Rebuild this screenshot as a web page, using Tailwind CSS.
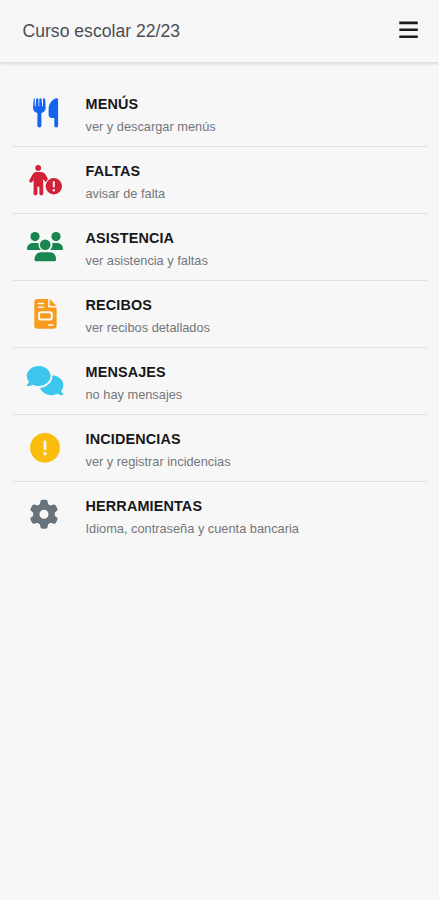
<!DOCTYPE html>
<html lang="es">
<head>
<meta charset="utf-8">
<meta name="viewport" content="width=device-width, initial-scale=1">
<title>Curso escolar 22/23</title>
<script src="https://cdn.jsdelivr.net/npm/@tailwindcss/browser@4"></script>
</head>
<body class="min-h-screen bg-[#f7f7f7] font-['Liberation_Sans',Arial,sans-serif]">
<header class="flex h-[63px] items-center justify-between border-b border-[#e2e2e2] pr-[21px] pl-[22.5px] shadow-[0_1px_3px_rgba(0,0,0,0.12)]">
  <h1 class="text-[17.6px] leading-6 text-[#4b4d52]">Curso escolar 22/23</h1>
  <button aria-label="Menú" class="mb-[3px]">
    <svg class="block" width="19" height="18" viewBox="0 0 19 18" fill="#1c1c1c"><path d="M.3 .6h18.500V3.200H.3zM.3 7.500h18.500v2.600H.3zM.3 14.400h18.500V17H.3z"/></svg>
  </button>
</header>
<main class="mr-3 ml-[13px] pt-[17px]">
  <a class="flex h-[67px] items-start border-b border-[#dedede] pt-[13px] pl-[7px]">
    <svg class="mr-[15.5px] shrink-0" width="50" height="40" viewBox="20 93 50 40" fill="#1463f3"><path d="M33.8 98.200q1 0 1 1v6.800q0 .5.4.5t.4-.5l.6-6.900q.1-.9 1.100-.9t1.100 .9l.2 6.900q0 .5.3.5t.3-.5l.2-6.900q.1-.9 1.100-.9t1.100 .9l.6 6.900q0 .5.4.5t.4-.5v-6.800q0-1 1-1t1.100 .9l.6 8.500q0 4.100-4.300 5.500v12.500q0 1.900-2 1.900t-2-1.900v-12.500q-4.400-1.400-4.400-5.500l.7-8.500q.1-.9 1.100-.9zM56.800 98.200q1.300 0 1.300 1.400v26q0 1.900-1.900 1.900t-1.900-1.900v-7.500h-2.300q-3.400 0-3.400-3.800v-4.800c0-6.200 4-10.800 8.200-11.300z"/></svg>
    <div><h2 class="text-[14.4px] leading-[23px] font-bold tracking-[0.15px] text-[#171719]">MENÚS</h2><p class="text-[12.8px] leading-[22px] text-[#74767a]">ver y descargar menús</p></div>
  </a>
  <a class="flex h-[67px] items-start border-b border-[#dedede] pt-[13px] pl-[7px]">
    <svg class="mr-[15.5px] shrink-0" width="50" height="40" viewBox="20 160 50 40" fill="#d22139"><circle cx="38.2" cy="167.900" r="2.900"/><path d="M35.400 172h5.600c2.200 0 3.600 1 4.600 2.800l2.400 4.200-2.400 3.200-2.400-3.300v14.500q0 1.900-1.900 1.900t-1.900-1.900v-6.700h-2v6.700q0 1.900-1.900 1.900t-1.900-1.900v-13.700l-1.200 2q-1 1.400-2.400.6t-.6-2.400l3.500-5.900q1-1.600 2.500-2z"/><circle cx="53.800" cy="186.300" r="8.200"/><path d="M53.800 182v4.500" stroke="#f7f7f7" stroke-width="2" stroke-linecap="round"/><circle cx="53.800" cy="190.300" r="1.200" fill="#f7f7f7"/></svg>
    <div><h2 class="text-[14.4px] leading-[23px] font-bold tracking-[0.15px] text-[#171719]">FALTAS</h2><p class="text-[12.8px] leading-[22px] text-[#74767a]">avisar de falta</p></div>
  </a>
  <a class="flex h-[67px] items-start border-b border-[#dedede] pt-[13px] pl-[7px]">
    <svg class="mr-[15.5px] shrink-0" width="50" height="40" viewBox="20 227 50 40" fill="#178650"><circle cx="35" cy="236.600" r="4.600"/><circle cx="56" cy="236.600" r="4.600"/><path d="M33 243h4.500l1.200.3c-.5 3 .5 5.200 2.400 6.700H28q-1 0-1-1c0-3.600 2.400-6 6-6zM52.300 243.300l1.200-.3H57c3.600 0 6 2.400 6 6q0 1-1 1H49.900c1.900-1.500 2.900-3.700 2.400-6.700zM41 252.200h9c4 0 6.100 3.200 6.100 7.600q0 1.400-1.400 1.400H35.900q-1.400 0-1.400-1.400c0-4.400 2.500-7.600 6.500-7.600z"/><circle cx="45.200" cy="244.800" r="5.300"/></svg>
    <div><h2 class="text-[14.4px] leading-[23px] font-bold tracking-[0.15px] text-[#171719]">ASISTENCIA</h2><p class="text-[12.8px] leading-[22px] text-[#74767a]">ver asistencia y faltas</p></div>
  </a>
  <a class="flex h-[67px] items-start border-b border-[#dedede] pt-[13px] pl-[7px]">
    <svg class="mr-[15.5px] shrink-0" width="50" height="40" viewBox="20 294 50 40" fill="#f99b1c"><path d="M37.700 299h10.400v7.200q0 1.400 1.400 1.400h7.100v17.800q0 3.300-3.400 3.300H37.700q-3.400 0-3.400-3.300v-23q0-3.400 3.400-3.400zM49.700 299l6.900 7h-6q-.9 0-.9-.9z"/><path d="M38.300 303.500h5.200M38.300 307.300h5.200M48.500 324.900h4.300" stroke="#f7f7f7" stroke-width="1.500" stroke-linecap="round"/><rect x="39" y="312.300" width="12.800" height="7.200" rx="2" fill="none" stroke="#f7f7f7" stroke-width="2"/></svg>
    <div><h2 class="text-[14.4px] leading-[23px] font-bold tracking-[0.15px] text-[#171719]">RECIBOS</h2><p class="text-[12.8px] leading-[22px] text-[#74767a]">ver recibos detallados</p></div>
  </a>
  <a class="flex h-[67px] items-start border-b border-[#dedede] pt-[13px] pl-[7px]">
    <svg class="mr-[15.5px] shrink-0" width="50" height="40" viewBox="20 361 50 40" fill="#3cc5ed"><path transform="translate(26.800 366) scale(.0571)" d="M208 352c114.900 0 208-78.800 208-176S322.900 0 208 0S0 78.800 0 176c0 38.600 14.700 74.300 39.600 103.400c-3.500 9.400-8.700 17.700-14.200 24.700c-4.800 6.200-9.700 11-13.300 14.300c-1.800 1.600-3.300 2.900-4.300 3.700c-.5 .4-.9 .7-1.100 .8l-.2 .2C1 327.200-1.400 334.400 .8 340.900S9.100 352 16 352c21.800 0 43.800-5.600 62.100-12.500c9.200-3.500 17.800-7.400 25.200-11.400C134.100 343.300 169.800 352 208 352zM448 176c0 112.300-99.100 196.900-216.500 207C255.800 457.400 336.400 512 432 512c38.200 0 73.900-8.700 104.700-23.900c7.500 4 16 7.900 25.200 11.400c18.300 6.900 40.300 12.500 62.100 12.500c6.900 0 13.100-4.500 15.200-11.100c2.100-6.600-.2-13.800-5.800-17.900l-.2-.2c-.2-.2-.6-.4-1.100-.8c-1-.8-2.500-2-4.300-3.700c-3.600-3.300-8.500-8.100-13.300-14.300c-5.500-7-10.700-15.400-14.200-24.700c24.900-29 39.600-64.700 39.600-103.400c0-92.800-84.900-168.900-192.600-175.500c.4 5.100 .6 10.300 .6 15.500z"/></svg>
    <div><h2 class="text-[14.4px] leading-[23px] font-bold tracking-[0.15px] text-[#171719]">MENSAJES</h2><p class="text-[12.8px] leading-[22px] text-[#74767a]">no hay mensajes</p></div>
  </a>
  <a class="flex h-[67px] items-start border-b border-[#dedede] pt-[13px] pl-[7px]">
    <svg class="mr-[15.5px] shrink-0" width="50" height="40" viewBox="20 428 50 40" fill="#fbbd0c"><circle cx="45" cy="447.800" r="14.900"/><path d="M45 441.900v7" stroke="#f7f7f7" stroke-width="2.800" stroke-linecap="round"/><circle cx="45" cy="453.800" r="1.800" fill="#f7f7f7"/></svg>
    <div><h2 class="text-[14.4px] leading-[23px] font-bold tracking-[0.15px] text-[#171719]">INCIDENCIAS</h2><p class="text-[12.8px] leading-[22px] text-[#74767a]">ver y registrar incidencias</p></div>
  </a>
  <a class="flex h-[67px] items-start pt-[13px] pl-[7px]">
    <svg class="mr-[15.5px] shrink-0" width="50" height="40" viewBox="20 495 50 40" fill="#68727b"><path transform="translate(29.500 499.700) scale(.0566)" d="M495.900 166.600c3.200 8.700 .5 18.400-6.400 24.600l-43.300 39.400c1.100 8.300 1.700 16.800 1.700 25.400s-.6 17.100-1.700 25.400l43.300 39.400c6.900 6.200 9.600 15.900 6.400 24.600c-4.400 11.900-9.700 23.300-15.800 34.300l-4.700 8.100c-6.600 11-14 21.400-22.100 31.200c-5.900 7.200-15.700 9.600-24.500 6.800l-55.700-17.700c-13.400 10.300-28.200 18.900-44 25.400l-12.500 57.100c-2 9.100-9 16.300-18.200 17.800c-13.800 2.300-28 3.500-42.500 3.500s-28.700-1.200-42.500-3.500c-9.200-1.500-16.200-8.700-18.200-17.800l-12.500-57.100c-15.800-6.500-30.600-15.100-44-25.400L83.100 425.900c-8.800 2.800-18.600 .3-24.500-6.800c-8.100-9.800-15.500-20.200-22.100-31.200l-4.700-8.100c-6.100-11-11.400-22.400-15.800-34.300c-3.200-8.700-.5-18.400 6.400-24.600l43.300-39.400C64.600 273.100 64 264.600 64 256s.6-17.100 1.700-25.400L22.400 191.200c-6.900-6.200-9.600-15.900-6.400-24.600c4.400-11.900 9.700-23.300 15.800-34.300l4.700-8.100c6.600-11 14-21.400 22.100-31.200c5.900-7.200 15.700-9.600 24.500-6.800l55.700 17.700c13.400-10.300 28.200-18.900 44-25.400l12.500-57.100c2-9.100 9-16.300 18.200-17.800C227.300 1.200 241.500 0 256 0s28.700 1.200 42.500 3.500c9.200 1.500 16.200 8.700 18.200 17.800l12.500 57.100c15.800 6.500 30.600 15.100 44 25.400l55.700-17.700c8.800-2.800 18.600-.3 24.500 6.800c8.100 9.800 15.500 20.200 22.100 31.200l4.700 8.100c6.100 11 11.400 22.400 15.800 34.300zM256 336a80 80 0 1 0 0-160 80 80 0 1 0 0 160z"/></svg>
    <div><h2 class="text-[14.4px] leading-[23px] font-bold tracking-[0.15px] text-[#171719]">HERRAMIENTAS</h2><p class="text-[12.8px] leading-[22px] text-[#74767a]">Idioma, contraseña y cuenta bancaria</p></div>
  </a>
</main>
</body>
</html>
